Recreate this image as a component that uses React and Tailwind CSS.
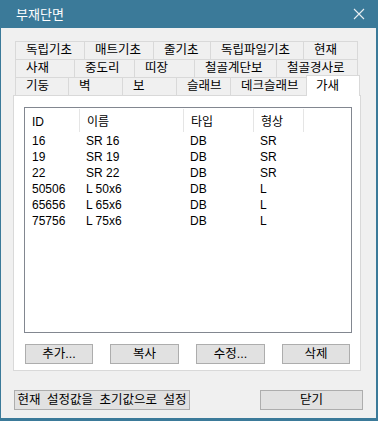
import React from "react";

const TAB_ROWS = [
  [["독립기초", 69], ["매트기초", 69], ["줄기초", 57], ["독립파일기초", 93], ["현재", 55]],
  [["사재", 59], ["중도리", 60], ["띠장", 60], ["철골계단보", 82], ["철골경사로", 82]],
  [["기둥", 53], ["벽", 54], ["보", 54], ["슬래브", 54], ["데크슬래브", 76], ["가새", 54, true]],
];

const ROWS = [
  ["16", "SR 16", "DB", "SR"],
  ["19", "SR 19", "DB", "SR"],
  ["22", "SR 22", "DB", "SR"],
  ["50506", "L 50x6", "DB", "L"],
  ["65656", "L 65x6", "DB", "L"],
  ["75756", "L 75x6", "DB", "L"],
];

const COLS = [54, 104, 70, 50];

function Btn({ children, className = "" }) {
  return (
    <div
      className={
        "h-[20px] flex items-center justify-center bg-[#e1e1e1] border border-[#adadad] leading-none " +
        className
      }
    >
      {children}
    </div>
  );
}

export default function App() {
  return (
    <div className="w-[378px] h-[421px] flex flex-col bg-[#f0f0f0] border-l border-r-2 border-b-[3px] border-[#3b7a99] text-[12px] text-black font-['Liberation_Sans','Noto_Sans_CJK_KR',sans-serif] overflow-hidden">
      {/* title bar */}
      <div className="h-[28px] shrink-0 bg-[#3b7a99] flex items-center justify-between pl-[15px] pr-[10px]">
        <span className="text-white text-[13px] leading-none">부재단면</span>
        <svg width="12" height="12" viewBox="0 0 12 12" className="mr-[1px]">
          <path d="M1 1L11 11M11 1L1 11" stroke="#e8eef2" strokeWidth="1.1" />
        </svg>
      </div>

      <div className="pl-[12px] pt-[13px] flex flex-col">
        {/* tabs */}
        <div className="ml-[2px] flex flex-col text-[12.5px]">
          {TAB_ROWS.map((row, ri) => (
            <div key={ri} className="flex h-[18px]">
              {row.map(([label, w, sel], i) =>
                sel ? (
                  <div
                    key={label}
                    style={{ width: w }}
                    className="relative z-10 -mt-[2px] h-[21px] bg-white border-t border-x border-[#d9d9d9] pl-[9px] pt-[2px] leading-[16px]"
                  >
                    {label}
                  </div>
                ) : (
                  <div
                    key={label}
                    style={{ width: w }}
                    className={
                      "h-[18px] border-t border-l border-[#d9d9d9] pl-[10px] leading-[17px] whitespace-nowrap " +
                      (i === row.length - 1 ? "border-r" : "")
                    }
                  >
                    {label}
                  </div>
                )
              )}
            </div>
          ))}
        </div>

        {/* panel */}
        <div className="w-[348px] h-[276px] bg-white border border-[#d9d9d9] flex flex-col pl-[10px] pt-[11px]">
          <div className="w-[328px] h-[226px] border border-[#828790] flex flex-col">
            <div className="flex h-[25px] shrink-0">
              {["ID", "이름", "타입", "형상"].map((h, i) => (
                <div
                  key={h}
                  style={{ width: COLS[i] }}
                  className={
                    "flex items-center pl-[7px] pt-[3px] my-[1px] " +
                    (i > 0 ? "border-l border-[#e5e5e5]" : "")
                  }
                >
                  {h}
                </div>
              ))}
              <div className="flex-1 border-l border-[#e5e5e5] my-[1px]" />
            </div>
            {ROWS.map((r) => (
              <div key={r[0]} className="flex h-[16px] items-center">
                {r.map((c, i) => (
                  <div key={i} style={{ width: COLS[i] }} className="pl-[7px] leading-[16px]">
                    {c}
                  </div>
                ))}
              </div>
            ))}
          </div>

          <div className="w-[325px] ml-[1px] mt-[11px] flex justify-between text-[12.5px]">
            <Btn className="w-[68px]">추가...</Btn>
            <Btn className="w-[69px]">복사</Btn>
            <Btn className="w-[69px]">수정...</Btn>
            <Btn className="w-[68px]">삭제</Btn>
          </div>
        </div>

        {/* bottom buttons */}
        <div className="w-[349px] ml-[1px] mt-[19px] flex justify-between text-[12.5px]">
          <Btn className="w-[176px] border-[#707070] [word-spacing:3px]">현재 설정값을 초기값으로 설정</Btn>
          <Btn className="w-[103px]">닫기</Btn>
        </div>
      </div>
    </div>
  );
}
